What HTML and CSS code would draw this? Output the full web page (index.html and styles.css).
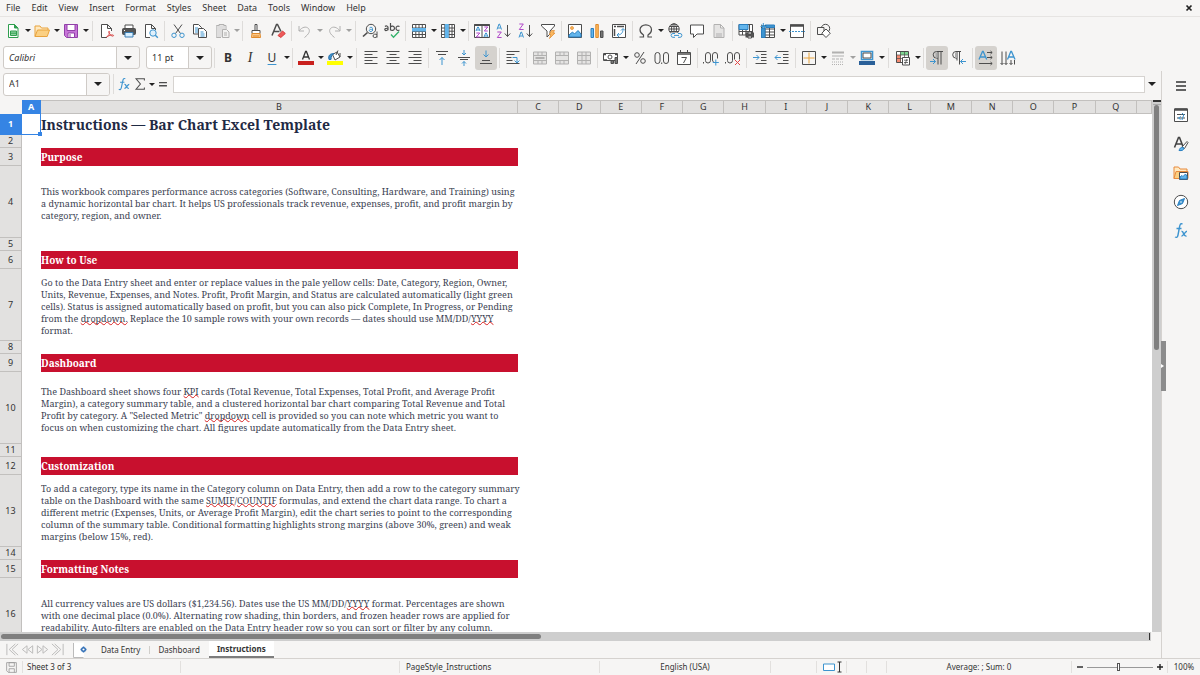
FILE: index.html
```html
<!DOCTYPE html>
<html lang="en">
<head>
<meta charset="utf-8">
<title>Bar Chart Excel Template</title>
<link rel="stylesheet" href="styles.css">
</head>
<body>
<div class="app">
  <nav class="menubar" aria-label="Menu">
    <button>File</button><button>Edit</button><button>View</button><button>Insert</button><button>Format</button><button>Styles</button><button>Sheet</button><button>Data</button><button>Tools</button><button>Window</button><button>Help</button>
    <button class="close" aria-label="Close"><svg viewBox="0 0 8 8"><path d="M1.500 1.500l5 5m0-5l-5 5" stroke="#222" stroke-width="1.700"/></svg></button>
  </nav>

  <div class="toolbar" role="toolbar" aria-label="Standard">
    <button class="tool" aria-label="New"><svg viewBox="0 0 16 16"><path d="M3.500 1.500h6l3.500 3.500v9.500h-9.500z" fill="#fff" stroke="#2f9e4f"/><path d="M9.500 1.500v3.500h3.500z" fill="#2f9e4f" stroke="#2f9e4f"/><path d="M5.500 8h6v4.500h-6zM5.500 10.200h6" fill="#8fd3a1" stroke="#2f9e4f"/></svg></button><button class="drop" aria-label="New options"></button>
    <button class="tool" aria-label="Open"><svg viewBox="0 0 16 16"><path d="M1 13.500V3h5l1.500 2H14v2" fill="#ffe9c0" stroke="#e8a33d"/><path d="M1 13.500L3.500 7H15.500l-2.300 6.500z" fill="#fbd083" stroke="#e8a33d"/></svg></button><button class="drop" aria-label="Open options"></button>
    <button class="tool" aria-label="Save"><svg viewBox="0 0 16 16"><path d="M1.500 1.500h13v13h-11l-2-2z" fill="#c774d8" stroke="#9140a8"/><path d="M4 1.500h8v6H4zM5 10h6.500v4.500H5z" fill="#fff" stroke="#9140a8"/><path d="M7 11v3" stroke="#9140a8"/></svg></button><button class="drop" aria-label="Save options"></button>
    <span class="sep wide"></span>
    <button class="tool" aria-label="Export as PDF"><svg viewBox="0 0 16 16"><path d="M8 14.500H2.500v-13h6L12.500 5.500V8M8.500 1.500v4h4" fill="#fff"/><path d="M7.500 14c3-2 3.500-4.500 3-5.500-1-1-1.500 1 .5 3s3.500 2 3.500 1-3-1-7 1.500z" stroke="#d94848"/></svg></button>
    <button class="tool" aria-label="Print"><svg viewBox="0 0 16 16"><path d="M4 5V2h8v3" fill="#fff"/><rect x="1.500" y="5.500" width="13" height="6" rx="1" fill="#555"/><path d="M4 9.500h8V14H4z" fill="#d8efff" stroke="#3a7fb5"/><path d="M3 7.500h1" stroke="#fff"/></svg></button>
    <button class="tool" aria-label="Print Preview"><svg viewBox="0 0 16 16"><path d="M7 14.500H2.500v-13h6L12.500 5.500V7M8.500 1.500v4h4" fill="#fff"/><circle cx="10" cy="10" r="3.200" fill="#dff0fc" stroke="#3d94cf"/><path d="M12.300 12.300l2.500 2.500" stroke="#3d94cf" stroke-width="1.400"/></svg></button>
    <span class="sep"></span>
    <button class="tool" aria-label="Cut"><svg viewBox="0 0 16 16"><path d="M4 1.500l6.500 9M12 1.500l-6.500 9"/><circle cx="4" cy="12.300" r="2.200" stroke="#3d94cf"/><circle cx="12" cy="12.300" r="2.200" stroke="#3d94cf"/></svg></button>
    <button class="tool" aria-label="Copy"><svg viewBox="0 0 16 16"><path d="M1.500 1.500h5l3 3V11h-8z" fill="#fff"/><path d="M6.500 5.500h5l3 3v6h-8z" fill="#fff"/><path d="M3 5h3M3 7h3M3 9h3M8.500 9h3M8.500 11h4M8.500 13h4" stroke="#3d94cf"/></svg></button>
    <button class="tool faded" aria-label="Paste"><svg viewBox="0 0 16 16"><path d="M5 2.500H2.500v12H7M10 2.500h2V6M5 1.500h5v3H5z" fill="#ccc"/><path d="M2.500 3h9v11h-9z" fill="#bbb" stroke="none"/><path d="M8.500 6.500h4l2.500 2.500v5.500H8.500z" fill="#eee"/><path d="M10 10h3M10 12h3"/></svg></button><button class="drop faded" aria-label="Paste options"></button>
    <span class="sep"></span>
    <button class="tool" aria-label="Clone Formatting"><svg viewBox="0 0 16 16"><path d="M7 1.500h2v6H7zM4 7.500h8v3H4z" fill="#fff"/><path d="M4 10.500h8l.5 4h-9z" fill="#fbc98a" stroke="#e08a2c"/><path d="M6 12v2M8 12v2M10 12v2" stroke="#e08a2c"/></svg></button>
    <button class="tool" aria-label="Clear Formatting"><svg viewBox="0 0 16 16"><path d="M2 12.500L6.500 1.500h1l3.500 7M4 8.500h5.500" stroke-width="1.500"/><path d="M8 12.500l4.500-4.500 2.800 2.500-4.500 4z" fill="#ee5a5a" stroke="#d63c3c"/></svg></button>
    <span class="sep"></span>
    <button class="tool faded" aria-label="Undo"><svg viewBox="0 0 16 16"><path d="M2 3v5h5M2 8c3-4 7-5 9.500-2.500 2 2.500.5 5.500-4 9"/></svg></button><button class="drop faded" aria-label="Undo options"></button>
    <button class="tool faded" aria-label="Redo"><svg viewBox="0 0 16 16"><path d="M14 3v5H9M14 8c-3-4-7-5-9.500-2.500-2 2.500-.5 5.500 4 9"/></svg></button><button class="drop faded" aria-label="Redo options"></button>
    <span class="sep wide"></span>
    <button class="tool" aria-label="Find and Replace"><svg viewBox="0 0 16 16"><circle cx="9" cy="6" r="4.700"/><path d="M5.500 9.500l-4.500 4" stroke-width="1.600"/><path d="M7.500 5c.5-1 3-1 3 .5V8m0-1.500C7.500 6 7 7 7.500 8s2.500.5 3-.5" stroke="#3d94cf"/><path d="M15 8.500v6m0-1c-1 1.500-4 1.500-4-.5s3-2.500 4-1"/></svg></button>
    <button class="tool" aria-label="Spelling"><svg viewBox="0 0 16 16"><path d="M1 3.500c1-1 3-.7 3 .8v3m0-2C1 5 .5 6 1 7s2.500.5 3-.7M6.500 0v7.500m0-1c1 1.500 4 1.200 4-1.300s-3-2.700-4-1.200M15.500 3.500c-1.500-.8-3.500-.3-3.500 1.700s2 3 3.500 1.700" stroke-width="1.200"/><path d="M7 11.500l2.500 2.800L15 8.500" stroke="#33b36b" stroke-width="1.300"/></svg></button>
    <span class="sep"></span>
    <button class="tool" aria-label="Row"><svg viewBox="0 0 16 16"><path d="M1.500 1.500h13v13h-13zM1.500 5h13M1.500 8.500h13M1.500 11.500h13M4.800 1.500v13M8 1.500v13M11.300 1.500v13" fill="#fff"/><path d="M1 5h14v3.500H1z" fill="#62b5ec" stroke="none"/></svg></button><button class="drop" aria-label="Row options"></button>
    <button class="tool" aria-label="Column"><svg viewBox="0 0 16 16"><path d="M1.500 1.500h13v13h-13zM1.500 5h13M1.500 8.200h13M1.500 11.500h13M4.800 1.500v13M9 1.500v13M12 1.500v13" fill="#fff"/><path d="M4.800 1h4v14h-4z" fill="#62b5ec" stroke="none"/></svg></button><button class="drop" aria-label="Column options"></button>
    <span class="sep"></span>
    <button class="tool" aria-label="Sort"><svg viewBox="0 0 16 16"><path d="M.5 1.500h15v13H.5zM8 2v12" fill="#fff"/><path d="M.5 2h15" stroke-width="2"/><path d="M2 8l1.700-4h.6L6 8M2.600 7h2.800M10 14l1.700-4h.6L14 14M10.600 13h2.800" stroke="#3d94cf"/><path d="M2.300 10h3.500l-3.500 4h3.500M10.300 4h3.500l-3.500 4h3.500" stroke="#b048c8"/></svg></button>
    <button class="tool" aria-label="Sort Ascending"><svg viewBox="0 0 16 16"><path d="M1 6.500l2-5.500h.5l2 5.500M1.700 5h3" stroke="#3d94cf"/><path d="M1.300 9h4l-4 5.500h4.300" stroke="#b048c8"/><path d="M11.500 2v11.500M8.800 10.500l2.700 3 2.700-3"/></svg></button>
    <button class="tool" aria-label="Sort Descending"><svg viewBox="0 0 16 16"><path d="M1 14.500L3 9h.5l2 5.500M1.700 13h3" stroke="#3d94cf"/><path d="M1.300 1h4l-4 5.500h4.300" stroke="#b048c8"/><path d="M11.500 2v11.500M8.800 10.500l2.700 3 2.700-3"/></svg></button>
    <button class="tool" aria-label="AutoFilter"><svg viewBox="0 0 16 16"><path d="M1.500 1.500h13v1.500L10 8v3l-3 3V8L1.500 3z" fill="#fff"/><path d="M11.500 7.500h3l-1.500 2.500h2L9.500 15.500l1.300-4H9.300z" fill="#fbb860" stroke="#e08a2c" stroke-width=".7"/></svg></button>
    <span class="sep"></span>
    <button class="tool" aria-label="Insert Image"><svg viewBox="0 0 16 16"><path d="M1.500 1.500h13v13h-13z" fill="#fff"/><circle cx="5" cy="5" r="1.500" fill="#fbb860" stroke="#e08a2c" stroke-width=".7"/><path d="M2 14v-2l3.500-3 2 2L11 7.500l3 3.500v3z" fill="#62b5ec" stroke="#2a7fc0"/></svg></button>
    <button class="tool" aria-label="Insert Chart"><svg viewBox="0 0 16 16"><path d="M2 5.500h2.500v9H2z" fill="#62b5ec" stroke="#2a7fc0"/><path d="M6.800 1.500h2.500v13H6.800z" fill="#fbb860" stroke="#e08a2c"/><path d="M11.500 8H14v6.500h-2.500z" fill="#777"/></svg></button>
    <button class="tool" aria-label="Insert Pivot Table"><svg viewBox="0 0 16 16"><path d="M1.500 1.500h13v13h-13z" fill="#fff"/><path d="M3 3.500h2M6 3.500h7M3.500 6v7" stroke-width="1.500"/><path d="M6 12c4 0 6-2 6-6M10 7.500l2-2 2 2M8 10l-2 2 2 2" stroke="#3d94cf"/></svg></button>
    <span class="sep"></span>
    <button class="tool" aria-label="Special Character"><svg viewBox="0 0 16 16"><path d="M1.500 14h4v-2C3 10.500 2 9 2 6.800 2 4 4.500 1.800 7.800 1.800S13.500 4 13.500 6.800c0 2.200-1 3.700-3.500 5.200v2h4" stroke-width="1.200"/></svg></button><button class="drop" aria-label="Special Character options"></button>
    <button class="tool" aria-label="Hyperlink"><svg viewBox="0 0 16 16"><circle cx="7" cy="6" r="5.200" fill="#fff"/><path d="M2 6h10M7 1v10M3 3.500h8M3 8.500h8"/><ellipse cx="7" cy="6" rx="2.500" ry="5.200"/><path d="M4 10h11v5H4z" fill="#f6f5f4" stroke="none"/><path d="M8 10.500H6a1.800 1.800 0 000 3.800h2M11 10.500h2a1.800 1.800 0 010 3.800h-2M7 12.400h5" stroke="#3d94cf"/></svg></button>
    <button class="tool" aria-label="Comment"><svg viewBox="0 0 16 16"><path d="M1.500 2h13v9H8l-3.500 3.500V11h-3z" fill="#fff"/></svg></button>
    <button class="tool faded" aria-label="Headers and Footers"><svg viewBox="0 0 16 16"><path d="M3 1.500h6.500L13 5v9.500H3zM9.500 1.500V5H13M5 11h6M5 13h6" fill="#ccc"/></svg></button>
    <span class="sep"></span>
    <button class="tool" aria-label="Define Print Area"><svg viewBox="0 0 16 16"><path d="M1 1.500h13.500v10.500H1zM1 8.500h13.500M4.500 1.500V12M8 1.500V12M11.500 1.500V12" fill="#fff"/><path d="M1 1.500h9v5H1z" fill="#62b5ec" stroke="#2a7fc0"/><rect x="8" y="10" width="7.500" height="4" fill="#555"/><path d="M10 9h3.500v2H10zM10 13h3.500v2H10z" fill="#fff"/></svg></button>
    <button class="tool" aria-label="Freeze"><svg viewBox="0 0 16 16"><path d="M1.500 2.500h13v12h-13zM5 2.500v12M9.500 2.500v12M2 6h12.500M2 9h12.500M2 12h12.500" fill="#fff"/><path d="M1.500 5.500H5v9H1.500zM6 2h8.500v2.500H6z" fill="#3d94cf" stroke="#2a7fc0"/><path d="M3.300 0v7M.5 3.500h6M1.500 1.500l4 4m0-4l-4 4" stroke="#3d94cf"/></svg></button><button class="drop" aria-label="Freeze options"></button>
    <button class="tool" aria-label="Split Window"><svg viewBox="0 0 16 16"><path d="M1.500 2h13v12.500h-13z" fill="#fff"/><path d="M1 2.500h14" stroke-width="2.500"/><path d="M0 8.500h16" stroke="#3d94cf" stroke-dasharray="2 1"/></svg></button>
    <span class="sep"></span>
    <button class="tool" aria-label="Draw Functions"><svg viewBox="0 0 16 16"><circle cx="9.500" cy="5.500" r="4.200"/><path d="M1.500 4.500h6.500v7H1.500z" fill="#f6f5f4"/><path d="M10 6l4.300 4.200L10 14.500l-4.200-4.300z" fill="#fff"/></svg></button>
  </div>

  <div class="toolbar" role="toolbar" aria-label="Formatting">
    <span class="combo font-name"><select aria-label="Font Name"><option>Calibri</option></select></span>
    <span class="combo font-size"><select aria-label="Font Size"><option>11 pt</option></select></span>
    <span class="sep"></span>
    <button class="tool bold">B</button>
    <button class="tool italic">I</button>
    <button class="tool under">U</button><button class="drop" aria-label="Underline options"></button>
    <span class="sep"></span>
    <button class="tool" aria-label="Font Color"><svg viewBox="0 0 16 16"><path d="M4.500 9.500L7.600 1.500h.8l3.100 8M5.500 7h5" stroke="#333" stroke-width="1.300"/><path d="M0 11h16v4H0z" fill="#c9211e" stroke="none"/></svg></button><button class="drop" aria-label="Font Color options"></button>
    <button class="tool" aria-label="Background Color"><svg viewBox="0 0 16 16"><path d="M5.500 4.500L10 2l3 5-5 3z" fill="#fff"/><path d="M9 5l2-4.500M13 3v4"/><path d="M2 9.500c-1-4 1-6 5-6-2 1-3 3-3 6z" fill="#3d94cf" stroke="#2a6fa8"/><path d="M0 11h16v4H0z" fill="#ff0" stroke="none"/></svg></button><button class="drop" aria-label="Background Color options"></button>
    <span class="sep wide"></span>
    <button class="tool" aria-label="Align Left"><svg viewBox="0 0 16 16"><path d="M1.500 1.500h13M1.500 4.500h8M1.500 7.500h13M1.500 10.500h8M1.500 13.500h13"/></svg></button>
    <button class="tool" aria-label="Center Horizontally"><svg viewBox="0 0 16 16"><path d="M1.500 1.500h13M4.500 4.500h7M1.500 7.500h13M4.500 10.500h7M1.500 13.500h13"/></svg></button>
    <button class="tool" aria-label="Align Right"><svg viewBox="0 0 16 16"><path d="M1.500 1.500h13M6.500 4.500h8M1.500 7.500h13M6.500 10.500h8M1.500 13.500h13"/></svg></button>
    <span class="sep"></span>
    <button class="tool" aria-label="Align Top"><svg viewBox="0 0 16 16"><path d="M2 1.500h12M4 4.500h8"/><path d="M8 15V7.500M5.500 10L8 7.500l2.500 2.500" stroke="#3d94cf"/></svg></button>
    <button class="tool" aria-label="Center Vertically"><svg viewBox="0 0 16 16"><path d="M2 7.500h12M4 9.500h8"/><path d="M8 0v5M6 3l2 2 2-2M8 16v-4.500M6 13.500l2-2 2 2" stroke="#3d94cf"/></svg></button>
    <button class="tool active" aria-label="Align Bottom"><svg viewBox="0 0 16 16"><path d="M4 10.500h8M2 13.500h12"/><path d="M8 .5V7M5.500 4.500L8 7l2.500-2.500" stroke="#3d94cf"/></svg></button>
    <span class="sep"></span>
    <button class="tool" aria-label="Wrap Text"><svg viewBox="0 0 16 16"><path d="M1.500 1.500h13M1.500 4.500h8M1.500 7.500h5M1.500 10.500h6M1.500 13.500h13"/><path d="M7.500 7.500h4.500v5M9.500 10.500l2.500 2.500 2.500-2.500" stroke="#3d94cf"/></svg></button>
    <span class="sep"></span>
    <button class="tool faded" aria-label="Merge and Center"><svg viewBox="0 0 16 16"><path d="M1.500 2h13v12h-13zM1.500 5.500h13M1.500 10.500h13M6 2v3.500M10 2v3.500M6 10.500V14M10 10.500V14" fill="#ccc"/><path d="M3.500 8h9" stroke-width="2"/></svg></button>
    <button class="tool faded" aria-label="Merge Cells"><svg viewBox="0 0 16 16"><path d="M1.500 2h13v12h-13zM1.500 5.500h13M1.500 10.500h13M6 2v3.500M10 2v3.500M6 10.500V14M10 10.500V14" fill="#ccc"/></svg></button>
    <button class="tool faded" aria-label="Unmerge Cells"><svg viewBox="0 0 16 16"><path d="M1.500 2h13v12h-13zM1.500 5.500h13M1.500 10.500h13M6 2v12M10 2v12" fill="#ccc"/></svg></button>
    <span class="sep"></span>
    <button class="tool" aria-label="Format as Currency"><svg viewBox="0 0 16 16"><path d="M.5 3.500h14v7H.5z" fill="#fff"/><circle cx="7" cy="7" r="2"/><path d="M1 4.500h2M12 4.500h2M1 10h3" stroke-width="1.500"/><path d="M8 10.500h2.500v3H8zM12 7.500h2.500v6H12z" fill="#777"/></svg></button><button class="drop" aria-label="Currency options"></button>
    <button class="tool" aria-label="Format as Percent"><svg viewBox="0 0 16 16"><circle cx="5" cy="5" r="2.300"/><circle cx="11" cy="11" r="2.300"/><path d="M12 2L4 14"/></svg></button>
    <button class="tool" aria-label="Format as Number"><svg viewBox="0 0 16 16"><rect x="1" y="2.500" width="5" height="11" rx="2.500"/><rect x="9.500" y="2.500" width="5" height="11" rx="2.500"/><path d="M7.700 12.500v1.500"/></svg></button>
    <button class="tool" aria-label="Format as Date"><svg viewBox="0 0 16 16"><path d="M1.500 2.500h13v12h-13z" fill="#fff"/><path d="M1.500 4h13" stroke-width="1.500"/><path d="M4.500 0v3M11.500 0v3M5.500 7.500h5L7.500 13"/></svg></button>
    <span class="sep"></span>
    <button class="tool" aria-label="Add Decimal Place"><svg viewBox="0 0 16 16"><path d="M.5 12v1.500"/><rect x="2.500" y="2.500" width="5" height="10.500" rx="2.500"/><path d="M10.500 12c-.6-.5-1-1.300-1-2V5a2.500 2.500 0 015 0v3.500"/><path d="M12.800 9.500v6M9.800 12.500h6" stroke="#3d94cf"/></svg></button>
    <button class="tool" aria-label="Delete Decimal Place"><svg viewBox="0 0 16 16"><path d="M.5 12v1.500"/><rect x="2.500" y="2.500" width="5" height="10.500" rx="2.500"/><path d="M9.500 9.500V5a2.500 2.500 0 015 0v4.500"/><path d="M10 10l5 5m0-5l-5 5" stroke="#e04848"/></svg></button>
    <span class="sep"></span>
    <button class="tool" aria-label="Increase Indent"><svg viewBox="0 0 16 16"><path d="M3.500 1.500h11M9 4.500h5.500M9 7.500h5.500M9 10.500h5.500M3.500 13.500h11"/><path d="M1 7.500h6M4.500 5L7 7.500 4.500 10" stroke="#3d94cf"/></svg></button>
    <button class="tool" aria-label="Decrease Indent"><svg viewBox="0 0 16 16"><path d="M3.500 1.500h11M9 4.500h5.500M9 7.500h5.500M9 10.500h5.500M3.500 13.500h11"/><path d="M7 7.500H1M3.500 5L1 7.500 3.500 10" stroke="#3d94cf"/></svg></button>
    <span class="sep"></span>
    <button class="tool" aria-label="Borders"><svg viewBox="0 0 16 16"><path d="M8 2.500v11M2.500 8h11" stroke="#e8a33d"/><path d="M1.500 1.500h13v13h-13z"/></svg></button><button class="drop" aria-label="Borders options"></button>
    <button class="tool faded" aria-label="Border Style"><svg viewBox="0 0 16 16"><path d="M2 2.500h12" stroke-width="2"/><path d="M2 6h12"/><path d="M2 9h12" stroke-dasharray="3 1"/><path d="M2 12h12M2 14.500h12" stroke-dasharray="1 1"/></svg></button><button class="drop faded" aria-label="Border Style options"></button>
    <button class="tool" aria-label="Border Color"><svg viewBox="0 0 16 16"><path d="M2.500 1.500h11v8h-11z" fill="#fff" stroke="#3d94cf" stroke-width="1.600"/><path d="M4 3h8v5H4z"/><path d="M0 11h16v4H0z" fill="#2a6099" stroke="none"/></svg></button><button class="drop" aria-label="Border Color options"></button>
    <span class="sep wide"></span>
    <button class="tool" aria-label="Conditional"><svg viewBox="0 0 16 16"><path d="M1.500 1.500h12v11h-12z" fill="#fff"/><path d="M5 2h8v3H5z" fill="#7ed491" stroke="none"/><path d="M2 5h4v7H2z" fill="#f58b72" stroke="none"/><path d="M1.500 5h12M1.500 8.500h12M5.500 1.500v11M9.500 1.500v11" stroke-width=".7"/><path d="M7.500 7.500h7v7.500h-7z" fill="#fff"/><path d="M9 10.200h4M9 12.500h4M12 9l-2 5" stroke-width=".8"/></svg></button><button class="drop" aria-label="Conditional options"></button>
    <span class="sep"></span>
    <button class="tool active" aria-label="Left-To-Right"><svg viewBox="0 0 16 16"><path d="M14 1.500H7.500a3.300 3.300 0 000 6.600H9M9 1.500v13M12 1.500v13"/><path d="M6.500 2.500h2V8h-2z" fill="#aaa" stroke="none"/><path d="M1 11.500h5.500M4 9l2.500 2.500L4 14" stroke="#3d94cf"/></svg></button>
    <button class="tool" aria-label="Right-To-Left"><svg viewBox="0 0 16 16"><path d="M10 1.500H5a3.300 3.300 0 000 6.600h1M6 1.500v9M8.500 1.500v13"/><path d="M4 2.500h2V8H4z" fill="#aaa" stroke="none"/><path d="M15 11.500H9.500M12 9l-2.500 2.500L12 14" stroke="#3d94cf"/></svg></button>
    <span class="sep"></span>
    <button class="tool active" aria-label="Text direction left to right"><svg viewBox="0 0 16 16"><path d="M1 9.500l3.500-8h.7l3.500 8M2.500 7h5" stroke="#3d94cf" stroke-width="1.300"/><path d="M9 2.500h5M9 7.500h5M1 13.500h13M12.500 1l1.700 1.500L12.500 4M12.500 6l1.700 1.500L12.500 9M12.500 12l1.700 1.500-1.700 1.500"/></svg></button>
    <button class="tool" aria-label="Text direction top to bottom"><svg viewBox="0 0 16 16"><path d="M7.500 9.500l3.300-8h.7l3.500 8M9 7h5" stroke="#3d94cf" stroke-width="1.300"/><path d="M2 1.500v13M6 1.500v13M11 10v4.500M14.500 10v4.500M.5 13L2 14.500 3.500 13M4.500 13L6 14.500 7.500 13M9.500 13l1.500 1.500 1.500-1.500"/></svg></button>
  </div>

  <div class="main">
    <div class="work">
      <div class="formula-bar">
        <span class="name-box"><input aria-label="Name Box" value="A1"><button aria-label="Name Box list"></button></span>
        <span class="sep"></span>
        <button class="fb" aria-label="Function Wizard"><svg viewBox="0 0 16 16"><path d="M9.500 2C7.500 1 7 2.500 6.500 5L5 12c-.5 2.500-1.500 2.800-3 2M3.500 6h5" stroke="#3d94cf" stroke-width="1.300"/><path d="M8.500 8.500c2-1 2 5.500 5 4.500M14 8.300c-2 0-3.500 5-5.500 4.700" stroke="#3d94cf" stroke-width="1.400"/></svg></button>
        <button class="fb" aria-label="Select Function"><svg viewBox="0 0 16 16"><path d="M13 4V2H3.500L8.500 8l-5 6H13V12" stroke-width="1.200"/></svg></button><button class="drop" aria-label="Select Function options"></button>
        <button class="fb" aria-label="Formula"><svg viewBox="0 0 16 16"><path d="M3.500 6.500h9M3.500 10h9" stroke-width="1.500"/></svg></button>
        <input class="formula" aria-label="Input line">
        <button class="expand" aria-label="Expand Formula Bar"></button>
      </div>

      <div class="sheet-row">
        <div class="sheet">
          <table>
            <colgroup><col class="c-head"><col class="c-a"><col class="c-b"><col span="15"><col class="c-last"></colgroup>
            <thead><tr><th class="corner"></th><th class="sel">A</th><th>B</th><th>C</th><th>D</th><th>E</th><th>F</th><th>G</th><th>H</th><th>I</th><th>J</th><th>K</th><th>L</th><th>M</th><th>N</th><th>O</th><th>P</th><th>Q</th><th></th></tr></thead>
            <tbody>
              <tr class="title"><th class="sel">1</th><td class="cursor"></td><td>Instructions — Bar Chart Excel Template</td></tr>
              <tr class="gap"><th>2</th><td></td><td></td></tr>
              <tr class="section"><th>3</th><td></td><td>Purpose</td></tr>
              <tr class="text"><th>4</th><td></td><td>This workbook compares performance across categories (Software, Consulting, Hardware, and Training) using<br>a dynamic horizontal bar chart. It helps US professionals track revenue, expenses, profit, and profit margin by<br>category, region, and owner.</td></tr>
              <tr class="gap"><th>5</th><td></td><td></td></tr>
              <tr class="section"><th>6</th><td></td><td>How to Use</td></tr>
              <tr class="text"><th>7</th><td></td><td>Go to the Data Entry sheet and enter or replace values in the pale yellow cells: Date, Category, Region, Owner,<br>Units, Revenue, Expenses, and Notes. Profit, Profit Margin, and Status are calculated automatically (light green<br>cells). Status is assigned automatically based on profit, but you can also pick Complete, In Progress, or Pending<br>from the <u>dropdown.</u> Replace the 10 sample rows with your own records — dates should use MM/DD/<u>YYYY</u><br>format.</td></tr>
              <tr class="gap"><th>8</th><td></td><td></td></tr>
              <tr class="section"><th>9</th><td></td><td>Dashboard</td></tr>
              <tr class="text"><th>10</th><td></td><td>The Dashboard sheet shows four <u>KPI</u> cards (Total Revenue, Total Expenses, Total Profit, and Average Profit<br>Margin), a category summary table, and a clustered horizontal bar chart comparing Total Revenue and Total<br>Profit by category. A "Selected Metric" <u>dropdown</u> cell is provided so you can note which metric you want to<br>focus on when customizing the chart. All figures update automatically from the Data Entry sheet.</td></tr>
              <tr class="gap"><th>11</th><td></td><td></td></tr>
              <tr class="section"><th>12</th><td></td><td>Customization</td></tr>
              <tr class="text"><th>13</th><td></td><td>To add a category, type its name in the Category column on Data Entry, then add a row to the category summary<br>table on the Dashboard with the same <u>SUMIF</u>/<u>COUNTIF</u> formulas, and extend the chart data range. To chart a<br>different metric (Expenses, Units, or Average Profit Margin), edit the chart series to point to the corresponding<br>column of the summary table. Conditional formatting highlights strong margins (above 30%, green) and weak<br>margins (below 15%, red).</td></tr>
              <tr class="gap"><th>14</th><td></td><td></td></tr>
              <tr class="section"><th>15</th><td></td><td>Formatting Notes</td></tr>
              <tr class="text"><th>16</th><td></td><td>All currency values are US dollars ($1,234.56). Dates use the US MM/DD/<u>YYYY</u> format. Percentages are shown<br>with one decimal place (0.0%). Alternating row shading, thin borders, and frozen header rows are applied for<br>readability. Auto-filters are enabled on the Data Entry header row so you can sort or filter by any column.</td></tr>
            </tbody>
          </table>
        </div>
        <div class="vscroll"><span class="split"></span><span class="thumb"></span></div>
      </div>
      <div class="hscroll"><span class="thumb"></span><span class="split"></span></div>

      <div class="tabs">
        <div class="tab-nav">
          <button aria-label="First sheet"><svg viewBox="0 0 16 16"><path d="M2 2v12M11 2L4.500 8l6.500 6M14 2L7.500 8l6.500 6"/></svg></button>
          <button aria-label="Previous sheet"><svg viewBox="0 0 16 16"><path d="M7.500 4L2.500 8l5 4zM13.500 4L8.500 8l5 4z"/></svg></button>
          <button aria-label="Next sheet"><svg viewBox="0 0 16 16"><path d="M2.500 4l5 4-5 4zM8.500 4l5 4-5 4z"/></svg></button>
          <button aria-label="Last sheet"><svg viewBox="0 0 16 16"><path d="M14 2v12M2 2l6.500 6L2 14M5 2l6.500 6L5 14"/></svg></button>
        </div>
        <button class="add" aria-label="Add sheet"><svg viewBox="0 0 16 16"><path d="M2 .5h10v15H2z" fill="#fff" stroke="none"/><path d="M1.500 1v14.500h10" stroke="#bbb"/><circle cx="11.500" cy="7.500" r="1.800" fill="#fff" stroke="#2f6db5" stroke-width="1.400"/><path d="M11.500 4.500v1M11.500 9.500v1M8.500 7.500h1M13.500 7.500h1" stroke="#2f6db5" stroke-width="1.400"/></svg></button>
        <button class="tab">Data Entry</button><button class="tab">Dashboard</button><button class="tab current">Instructions</button>
      </div>
    </div>

    <aside class="sidebar">
      <button aria-label="Sidebar Settings"><svg viewBox="0 0 16 16"><path d="M3 4h10M3 8h10M3 12h10" stroke="#333" stroke-width="1.500"/></svg></button>
      <button aria-label="Properties"><svg viewBox="0 0 16 16"><path d="M1.500 2h13v12.500h-13z" fill="#fff"/><path d="M1.500 2.500h13" stroke-width="2.500"/><path d="M4 7.500h8M4 11h8" stroke-width="1.200"/><path d="M10 6L8.500 7.500M8 9.500L5.500 11l2 1.500M9 13l2-6" stroke="#3d94cf"/></svg></button>
      <button aria-label="Styles"><svg viewBox="0 0 16 16"><path d="M1.500 11.500l4-10h1l3.500 9M3 8h5.500" stroke="#444" stroke-width="1.600"/><path d="M9 11l5-5.500 1 1-3.500 6z" fill="#fff"/><path d="M6 14.500c1-3 3-4 5-2.500 0 2-2 3-5 2.500z" fill="#62b5ec" stroke="#2a7fc0"/></svg></button>
      <button aria-label="Gallery"><svg viewBox="0 0 16 16"><path d="M1 13.500V2h4.500L7 4h7v3" fill="#ffe9c0" stroke="#e88a3d"/><path d="M1 13.500L3 6.500h12v7z" fill="#fbd083" stroke="#e88a3d"/><path d="M6.500 7.500h8v7h-8z" fill="#fff"/><path d="M7 14v-2l2-1.500 1 1L12.500 9l1.500 2v3z" fill="#62b5ec" stroke="#2a7fc0"/></svg></button>
      <button aria-label="Navigator"><svg viewBox="0 0 16 16"><circle cx="8" cy="8" r="6.700" fill="#fff"/><path d="M11.500 4.500L9.500 9.500l-5 2 2-5z" fill="#3d94cf" stroke="#2a7fc0"/><circle cx="8" cy="8" r=".8" fill="#fff" stroke="none"/></svg></button>
      <button aria-label="Functions"><svg viewBox="0 0 16 16"><path d="M9.500 1C7.500 0 7 1.500 6.500 4L5 12c-.5 2.500-1.500 2.800-3 2M3.500 5.500h5" stroke="#3d94cf" stroke-width="1.400"/><path d="M8.500 8.500c2-1 2 5.500 5 4.500M14 8.300c-2 0-3.500 5-5.500 4.700" stroke="#3d94cf" stroke-width="1.400"/></svg></button>
      <button class="handle" aria-label="Hide sidebar"></button>
    </aside>
  </div>

  <footer class="status">
    <span class="s-save"><svg viewBox="0 0 16 16"><path d="M2 2h12v12H4l-2-2zM5 2h6.500v4.500H5zM5 14V9.500h6.500V14" stroke="#999"/></svg></span>
    <span class="s-sheet">Sheet 3 of 3</span>
    <span class="s-sum1"></span>
    <span class="s-style">PageStyle_Instructions</span>
    <span class="s-lang">English (USA)</span>
    <span class="s-gap"></span>
    <span class="s-mode"><svg viewBox="0 0 24 16"><path d="M3.500 5h11v6.500h-11z" fill="#fff" stroke="#3d94cf"/><path d="M17.500 3h4M17.500 13h4M19.500 3v10" stroke="#333"/></svg></span>
    <span class="s-cell"></span><span class="s-cell"></span>
    <span class="s-avg">Average: ; Sum: 0</span>
    <span class="s-zoom"><button aria-label="Zoom out"><svg viewBox="0 0 8 8"><path d="M1 4h6" stroke="#222" stroke-width="1.400"/></svg></button><input type="range" min="0" max="100" value="49" aria-label="Zoom"><button aria-label="Zoom in"><svg viewBox="0 0 8 8"><path d="M1 4h6M4 1v6" stroke="#222" stroke-width="1.400"/></svg></button></span>
    <span class="s-pct">100%</span>
  </footer>
</div>
</body>
</html>
```
FILE: styles.css
```css
* { box-sizing: border-box; }

body {
  margin: 0;
  font: 9px/12px "Noto Sans", "Open Sans", sans-serif;
  color: #333;
  background: #f6f5f4;
}

button, input, select {
  margin: 0;
  padding: 0;
  border: 0;
  background: none;
  font: inherit;
  color: inherit;
}

svg {
  display: block;
  fill: none;
  stroke: #4d4d4d;
}

.app { display: flex; flex-direction: column; height: 100vh; overflow: hidden; }

/* Menu bar */
.menubar {
  display: flex;
  align-items: center;
  gap: 11px;
  height: 17px;
  padding: 0 7px 0 6px;
  border-bottom: 1px solid #e6e4e2;
}
.menubar .close { margin-left: auto; }
.menubar .close svg { width: 8px; height: 8px; }

/* Toolbars */
.toolbar { display: flex; align-items: center; height: 27px; padding: 0 2px; }
.tool {
  display: flex;
  flex: none;
  align-items: center;
  justify-content: center;
  width: 22px;
  height: 24px;
  border-radius: 3px;
}
.tool svg { width: 16px; height: 16px; }
.tool.active { background: #d5d2ce; }
.faded { opacity: .4; }
.bold, .italic, .under { font-size: 12px; line-height: 16px; }
.bold { font-weight: 700; }
.italic { font-family: "Liberation Serif", serif; font-style: italic; font-size: 14px; }
.under { text-decoration: underline; text-decoration-color: #3d94cf; text-underline-offset: 2px; }

.drop, .expand, .name-box button { display: flex; flex: none; align-items: center; justify-content: center; }
.drop { width: 7px; height: 24px; }
.drop::after, .expand::after, .name-box button::after, .combo::after {
  content: "";
  border: solid transparent;
  border-top-color: #222;
}
.drop::after { border-width: 3px 3px 0; }
.expand::after, .name-box button::after, .combo::after { border-width: 4px 4px 0; }

.sep { flex: none; width: 5px; height: 20px; background: linear-gradient(#dedcda, #dedcda) center / 1px 100% no-repeat; }
.sep.wide { width: 7px; }

.combo, .name-box {
  display: flex;
  flex: none;
  align-items: center;
  height: 23px;
  border: 1px solid #cfcbc7;
  border-radius: 3px;
  background: #fff;
  overflow: hidden;
}
.combo { position: relative; background: linear-gradient(90deg, #fff calc(100% - 23px), #cfcbc7 calc(100% - 23px), #cfcbc7 calc(100% - 22px), #f6f5f4 calc(100% - 22px)); }
.combo::after { position: absolute; right: 7px; pointer-events: none; }
.combo select { appearance: none; flex: 1; height: 100%; padding-left: 5px; }
.font-name { width: 137px; margin: 0 6px 0 1px; font-style: italic; }
.font-size { width: 66px; }

/* Formula bar */
.formula-bar { display: flex; align-items: center; height: 29px; padding: 0 3px 3px; }
.name-box { width: 107px; margin-right: 1px; }
.name-box input { flex: 1; min-width: 0; padding-left: 5px; outline: 0; }
.name-box button { width: 23px; height: 100%; border-left: 1px solid #cfcbc7; background: #f6f5f4; }
.fb { flex: none; width: 14px; margin: 0 1px; }
.fb svg { width: 14px; height: 14px; }
.formula { flex: 1; min-width: 0; height: 17px; margin-left: 2px; border: 1px solid #d6d3d0; background: #fff; }
.expand { width: 13px; height: 20px; }

/* Work area */
.main { display: flex; flex: 1; min-height: 0; }
.work { display: flex; flex: 1; flex-direction: column; min-width: 0; }
.sheet-row { display: flex; flex: 1; min-height: 0; }
.sheet { flex: 1; min-width: 0; overflow: hidden; background: #fff; }

table { width: 100%; table-layout: fixed; border-collapse: separate; border-spacing: 0; }
.c-head { width: 22px; }
.c-a { width: 19px; }
.c-b { width: 477px; }
.c-last { width: 15px; }
th, td { padding: 0; white-space: nowrap; }
th {
  border-right: 1px solid #c2c0be;
  border-bottom: 1px solid #c2c0be;
  background: #e2e1e0;
  font-weight: 400;
  text-align: center;
}
thead th { height: 14px; border-top: 1px solid #c2c0be; line-height: 12px; }
thead .corner { border-color: transparent; background: #f6f5f4; }
th.sel { border-color: #3584e4; background: #3584e4; color: #fff; font-weight: 700; }
td {
  font-family: "Noto Serif", "DejaVu Serif Condensed", "DejaVu Serif", serif;
  color: #3b4252;
}
.cursor { position: relative; border: 1px solid #3584e4; border-width: 0 1px 1px 0; }
.cursor::after { content: ""; position: absolute; right: -2px; bottom: -2px; width: 4px; height: 4px; background: #3584e4; }
.title { height: 21px; }
.title td { font-size: 14px; line-height: 18px; font-weight: 700; color: #1f2a44; }
.gap { height: 13px; }
.section { height: 18px; }
.section td:last-child { background: #c8102e; color: #fff; font-size: 10px; font-weight: 700; }
.text { height: 72px; }
.text td { padding-top: 3px; font-size: 9px; line-height: 12px; }
.text u { text-decoration: underline wavy #d82020 1px; text-underline-offset: -1px; text-decoration-skip-ink: none; }

.vscroll { display: flex; flex-direction: column; align-items: center; width: 9px; background: #cecece; }
.vscroll .split { width: 8px; height: 5px; border-bottom: 1px solid #aaa; border-top: 2px solid #333; }
.vscroll .thumb { width: 5px; height: 46%; border-radius: 3px; background: #7f7f7f; }
.hscroll { display: flex; align-items: center; justify-content: space-between; height: 9px; margin-right: 10px; padding: 0 1px; background: #cecece; }
.hscroll .thumb { width: 47%; height: 5px; border-radius: 3px; background: #7f7f7f; }
.hscroll .split { width: 1px; height: 7px; background: #333; }

/* Sheet tabs */
.tabs { display: flex; align-items: stretch; height: 17px; font-size: 8px; }
.tab-nav { display: flex; align-items: center; width: 72px; padding-left: 5px; opacity: .35; }
.tab-nav svg { width: 15px; height: 15px; }
.add { width: 20px; }
.add svg { width: 16px; height: 16px; }
.tab { padding: 0 9px; }
.tab + .tab { background: linear-gradient(#d0ceca, #d0ceca) left / 1px 8px no-repeat; }
.tab.current { padding: 0 8px; border-bottom: 2px solid #7d7d7d; background: #fff; font-weight: 700; }

/* Sidebar */
.sidebar {
  position: relative;
  display: flex;
  flex-direction: column;
  align-items: center;
  gap: 13px;
  width: 39px;
  padding: 7px 0 0;
  border-left: 1px solid #d5d2cf;
}
.sidebar svg { width: 16px; height: 16px; }
.sidebar .handle { position: absolute; left: -1px; top: 46%; width: 5px; height: 50px; background: #8c8c8c; }
.handle::after { content: ""; position: absolute; left: 0; top: 23px; border: solid transparent; border-width: 2px 0 2px 3px; border-left-color: #fff; }

/* Status bar */
.status { display: flex; align-items: center; height: 17px; border-top: 1px solid #d5d2cf; font-size: 8px; }
.status > span { display: flex; align-items: center; justify-content: center; height: 12px; border-left: 1px solid #e2e0de; }
.status > .s-save { width: 22px; border: 0; }
.s-save svg { width: 13px; height: 13px; }
.status > .s-sheet { width: 158px; padding-left: 4px; justify-content: flex-start; }
.s-sum1 { width: 219px; }
.status > .s-style { width: 200px; padding-left: 6px; justify-content: flex-start; }
.s-lang { flex: 1; }
.s-gap { width: 46px; }
.s-mode { width: 30px; }
.s-mode svg { width: 24px; height: 16px; }
.s-cell { width: 20px; }
.s-avg { width: 185px; }
.s-zoom { gap: 3px; width: 96px; }
.s-zoom svg { width: 8px; height: 8px; }
.s-zoom input { appearance: none; width: 66px; height: 10px; background: linear-gradient(#999, #999) center / 100% 1px no-repeat; }
.s-zoom input::-webkit-slider-thumb { appearance: none; width: 3px; height: 8px; border: 1px solid #555; background: #fff; }
.s-pct { width: 33px; }
```
